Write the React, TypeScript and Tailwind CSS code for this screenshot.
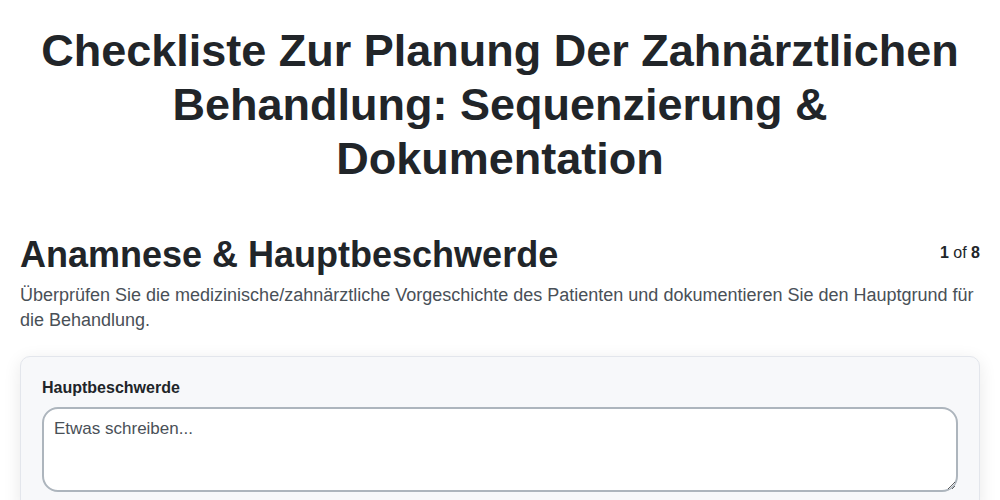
export default function App() {
  return (
    <div className="min-h-screen bg-white px-5 text-[#212529]" style={{ fontFamily: '"Liberation Sans", Arial, sans-serif' }}>
      <h1 className="pt-6 text-center text-[45px] font-bold leading-[54px]">
        Checkliste Zur Planung Der Zahnärztlichen Behandlung: Sequenzierung &amp; Dokumentation
      </h1>
      <div className="mt-[47px] flex items-start justify-between">
        <h2 className="text-[36px] font-bold leading-[43px]">Anamnese &amp; Hauptbeschwerde</h2>
        <div className="pt-[8px] text-[16px] leading-[24px]">
          <span className="font-bold">1</span> of <span className="font-bold">8</span>
        </div>
      </div>
      <p className="mt-[7px] text-[18px] leading-[25px] text-[#495057]">
        Überprüfen Sie die medizinische/zahnärztliche Vorgeschichte des Patienten und dokumentieren Sie den Hauptgrund für die Behandlung.
      </p>
      <div className="mt-[23px] rounded-[10px] border border-[#e3e6ec] bg-[#f7f8fa] px-[21px] pt-[19px] pb-6 shadow-[0_4px_18px_rgba(0,0,0,0.09)]">
        <label className="block text-[16px] font-bold leading-[24px]">Hauptbeschwerde</label>
        <textarea
          className="mt-[7px] block h-[85px] w-full resize-y rounded-2xl border-2 border-[#adb5bd] bg-white px-[10px] py-[7px] text-[17px] text-[#212529] placeholder:text-[#495057] outline-none"
          placeholder="Etwas schreiben..."
        />
      </div>
    </div>
  );
}
